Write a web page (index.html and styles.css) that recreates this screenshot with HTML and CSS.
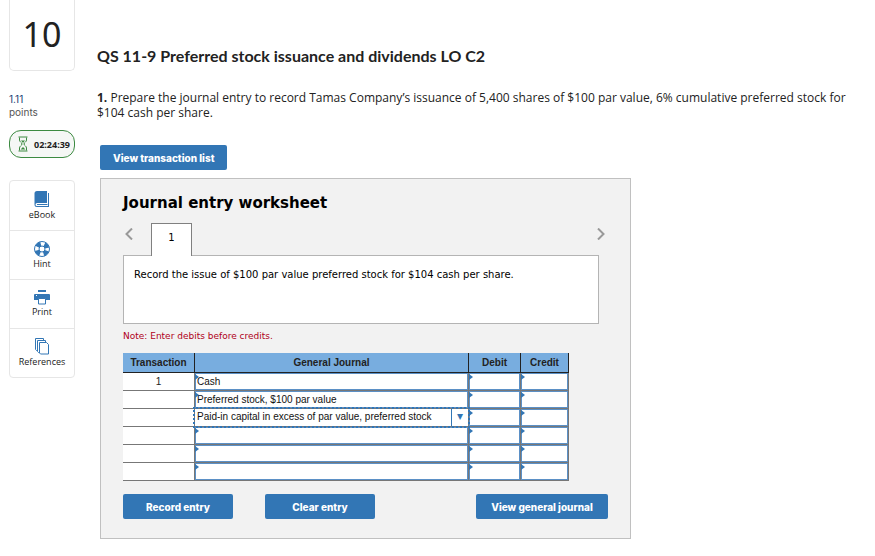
FILE: index.html
```html
<!DOCTYPE html>
<html lang="en">
<head>
    <meta charset="UTF-8">
    <meta name="viewport" content="width=device-width, initial-scale=1.0">
    <title>QS 11-9 Preferred stock issuance and dividends</title>
    <link rel="stylesheet" href="styles.css">
</head>
<body>
    <div class="page">
        <aside class="sidebar">
            <div class="number">10</div>
            <div class="points"><span class="value">1.11</span><br>points</div>
            <div class="timer">
                <svg width="10" height="16" viewBox="0 0 10 16" fill="none" stroke="#3c8a41">
                    <path d="M0.5 1h9M0.5 15h9M1.5 1.500v2.500c0 2 2.500 2.500 2.500 4s-2.500 2-2.500 4v2.500M8.500 1.500v2.500c0 2-2.500 2.500-2.500 4s2.500 2 2.500 4v2.500"/>
                    <path d="M3 4.500h4L5 7zM2.500 13.500L5 11l2.500 2.500z" fill="#3c8a41" stroke="none"/>
                </svg>
                <span>02:24:39</span>
            </div>
            <nav class="tools">
                <a href="#ebook">
                    <svg width="16" height="17" viewBox="0 0 16 17">
                        <path d="M3 0h10v12H3a1.500 1.500 0 0 0 0 3h11V2h1v14H3a2.500 2.500 0 0 1-2.500-2.500v-11A2.500 2.500 0 0 1 3 0z" fill="#3276b5"/>
                        <path d="M3 13.500h10.500" stroke="#3276b5"/>
                    </svg>
                    <span>eBook</span>
                </a>
                <a href="#hint">
                    <svg width="16" height="16" viewBox="0 0 16 16" fill="none" stroke="#3276b5">
                        <circle cx="8" cy="8" r="7.500"/>
                        <circle cx="8" cy="8" r="3"/>
                        <circle cx="8" cy="8" r="5.200" stroke-width="4.600" stroke-dasharray="4.400 3.768" stroke-dashoffset="-1.884"/>
                    </svg>
                    <span>Hint</span>
                </a>
                <a href="#print">
                    <svg width="16" height="15" viewBox="0 0 16 15" fill="#3276b5">
                        <path d="M4 0h8v2H4zM1 4h14a1 1 0 0 1 1 1v5H0V5a1 1 0 0 1 1-1z"/>
                        <path d="M4.500 8.500h7v5.500h-7z" fill="#fff" stroke="#3276b5"/>
                        <path d="M2 5h1v1H2z" fill="#fff"/>
                    </svg>
                    <span>Print</span>
                </a>
                <a href="#references">
                    <svg width="16" height="17" viewBox="0 0 16 17" fill="#fff" stroke="#3276b5">
                        <path d="M1.500 0.500h8v12h-7l-1-1z"/>
                        <path d="M3.500 2.500h8v12h-7l-1-1z"/>
                        <path d="M5.500 4.500h7l2 2v9.500h-8l-1-1z"/>
                    </svg>
                    <span>References</span>
                </a>
            </nav>
        </aside>

        <main class="content">
            <h1>QS 11-9 Preferred stock issuance and dividends LO C2</h1>
            <p class="question"><b>1.</b> Prepare the journal entry to record Tamas Company’s issuance of 5,400 shares of $100 par value, 6% cumulative preferred stock for $104 cash per share.</p>

            <div class="exercise">
                <button class="btn" type="button">View transaction list</button>

                <section class="worksheet">
                    <h2>Journal entry worksheet</h2>
                    <div class="tabs">
                        <button class="arrow" type="button" aria-label="Previous">
                            <svg width="8" height="12" viewBox="0 0 8 12" fill="none" stroke="#999" stroke-width="2"><path d="M7 0.500L1.500 6L7 11.500"/></svg>
                        </button>
                        <button class="tab" type="button">1</button>
                        <button class="arrow next" type="button" aria-label="Next">
                            <svg width="8" height="12" viewBox="0 0 8 12" fill="none" stroke="#999" stroke-width="2"><path d="M1 0.500L6.500 6L1 11.500"/></svg>
                        </button>
                    </div>
                    <div class="description">Record the issue of $100 par value preferred stock for $104 cash per share.</div>
                    <p class="note">Note: Enter debits before credits.</p>

                    <table class="journal">
                        <colgroup>
                            <col class="col-transaction">
                            <col>
                            <col class="col-debit">
                            <col class="col-credit">
                        </colgroup>
                        <thead>
                            <tr><th>Transaction</th><th>General Journal</th><th>Debit</th><th>Credit</th></tr>
                        </thead>
                        <tbody>
                            <tr>
                                <td>1</td>
                                <td class="entry"><input type="text" value="Cash" aria-label="Account 1"></td>
                                <td class="entry"><input type="text" aria-label="Debit 1"></td>
                                <td class="entry"><input type="text" aria-label="Credit 1"></td>
                            </tr>
                            <tr>
                                <td></td>
                                <td class="entry"><input type="text" value="Preferred stock, $100 par value" aria-label="Account 2"></td>
                                <td class="entry"><input type="text" aria-label="Debit 2"></td>
                                <td class="entry"><input type="text" aria-label="Credit 2"></td>
                            </tr>
                            <tr>
                                <td></td>
                                <td class="entry active">
                                    <select aria-label="Account 3">
                                        <option>Paid-in capital in excess of par value, preferred stock</option>
                                        <option>Cash</option>
                                        <option>Preferred stock, $100 par value</option>
                                    </select>
                                </td>
                                <td class="entry"><input type="text" aria-label="Debit 3"></td>
                                <td class="entry"><input type="text" aria-label="Credit 3"></td>
                            </tr>
                            <tr>
                                <td></td>
                                <td class="entry"><input type="text" aria-label="Account 4"></td>
                                <td class="entry"><input type="text" aria-label="Debit 4"></td>
                                <td class="entry"><input type="text" aria-label="Credit 4"></td>
                            </tr>
                            <tr>
                                <td></td>
                                <td class="entry"><input type="text" aria-label="Account 5"></td>
                                <td class="entry"><input type="text" aria-label="Debit 5"></td>
                                <td class="entry"><input type="text" aria-label="Credit 5"></td>
                            </tr>
                            <tr>
                                <td></td>
                                <td class="entry"><input type="text" aria-label="Account 6"></td>
                                <td class="entry"><input type="text" aria-label="Debit 6"></td>
                                <td class="entry"><input type="text" aria-label="Credit 6"></td>
                            </tr>
                        </tbody>
                    </table>

                    <div class="actions">
                        <button class="btn wide" type="button">Record entry</button>
                        <button class="btn wide" type="button">Clear entry</button>
                        <button class="btn last" type="button">View general journal</button>
                    </div>
                </section>
            </div>
        </main>
    </div>
</body>
</html>
```
FILE: styles.css
```css
* {
    box-sizing: border-box;
}
body {
    margin: 0;
    background-color: #fff;
    color: #222;
    font-family: Lato, sans-serif;
}
.page {
    display: flex;
    gap: 22px;
    padding: 0 22px 16px 9px;
}

/* left column */
.sidebar {
    flex: none;
    width: 66px;
}
.number {
    height: 71px;
    border: 1px solid #e6e6e6;
    border-top: none;
    border-radius: 0 0 5px 5px;
    font-family: "Noto Sans", sans-serif;
    font-size: 34px;
    line-height: 68px;
    text-align: center;
}
.points {
    margin-top: 22px;
    font-family: Inter, sans-serif;
    font-size: 10px;
    line-height: 13px;
    color: #555;
}
.value {
    color: #1c3f73;
}
.timer {
    display: flex;
    align-items: center;
    justify-content: space-between;
    height: 28px;
    margin-top: 11px;
    padding: 0 4px 0 8px;
    border: 1px solid #3c8a41;
    border-radius: 12px;
    background-color: #f5f7f5;
    font-family: "Open Sans", sans-serif;
    font-size: 9px;
    font-weight: bold;
}
.tools {
    margin-top: 22px;
    border: 1px solid #e6e6e6;
    border-radius: 4px;
}
.tools a {
    display: flex;
    flex-direction: column;
    align-items: center;
    justify-content: center;
    height: 49px;
    color: #222;
    font-family: "Open Sans", sans-serif;
    font-size: 9px;
    line-height: 13px;
    text-decoration: none;
}
.tools a + a {
    border-top: 1px solid #e6e6e6;
}

/* question */
.content {
    flex: 1;
    min-width: 0;
}
h1 {
    margin: 46px 0 0;
    font-size: 16px;
    line-height: 20px;
}
.question {
    margin: 24px 0 0;
    font-family: "Open Sans", sans-serif;
    font-size: 12px;
    line-height: 15px;
}
.exercise {
    max-width: 534px;
    margin-top: 25px;
    padding-left: 3px;
}
.btn {
    height: 25px;
    padding: 0 13px;
    border: none;
    border-radius: 2px;
    background-color: #3276b5;
    color: #fff;
    font-family: Inter, sans-serif;
    font-size: 10px;
    font-weight: 800;
    cursor: pointer;
}

/* worksheet */
.worksheet {
    margin-top: 8px;
    padding: 14px 22px 19px;
    border: 1px solid #c0c0c0;
    background-color: #f2f2f2;
    color: #000;
    font-family: "DejaVu Sans", sans-serif;
}
h2 {
    margin: 0;
    font-size: 15px;
    line-height: 20px;
}
.tabs {
    display: flex;
    height: 42px;
    padding-top: 10px;
}
.arrow {
    display: flex;
    align-items: center;
    width: 28px;
    height: 22px;
    padding: 0 0 0 2px;
    border: none;
    background: none;
}
.arrow.next {
    width: 13px;
    margin-left: auto;
}
.tab {
    z-index: 1;
    width: 41px;
    height: 33px;
    padding: 0 0 5px;
    border: 1px solid #808080;
    border-bottom: none;
    background-color: #fff;
    color: #000;
    font-family: inherit;
    font-size: 10px;
}
.description {
    min-height: 69px;
    margin-right: 9px;
    padding: 11px 10px;
    border: 1px solid #b4b4b4;
    background-color: #fff;
    font-size: 10px;
    line-height: 15px;
}
.note {
    margin: 5px 0 10px;
    color: #b00020;
    font-size: 9px;
    line-height: 14px;
}
.journal {
    width: 446px;
    max-width: 100%;
    table-layout: fixed;
    border-spacing: 0;
    color: #222;
    font-family: "Liberation Sans", Arial, sans-serif;
    font-size: 10px;
}
.col-transaction {
    width: 72px;
}
.col-debit {
    width: 52px;
}
.col-credit {
    width: 48px;
}
.journal th {
    height: 20px;
    padding: 0;
    border-right: 1px solid #222;
    border-bottom: 1px solid #222;
    background-color: #78addf;
}
.journal td {
    position: relative;
    height: 18px;
    padding: 0;
    border-right: 1px solid #777;
    border-bottom: 1px solid #777;
    background-color: #fff;
    text-align: center;
}
.entry input,
.entry select {
    display: block;
    width: 100%;
    height: 17px;
    padding: 0 1px 1px;
    border: 1px solid #5b90c6;
    border-radius: 0;
    background-color: #fff;
    color: #111;
    font: inherit;
}
.entry::before {
    content: "";
    position: absolute;
    top: 1px;
    left: 0;
    border: 3px solid transparent;
    border-left: 4px solid #3276b5;
    border-right: none;
}
.entry select {
    appearance: none;
    border: none;
    outline: 2px dotted #3276b5;
    padding: 0 2px 2px;
}
.entry.active::before {
    display: none;
}
.entry.active {
    z-index: 1;
}
/* drop-down handle */
.entry.active::after {
    content: "▾";
    position: absolute;
    top: 0;
    right: 0;
    width: 16px;
    height: 17px;
    border-left: 1px solid #3276b5;
    color: #3276b5;
    font-size: 12px;
    line-height: 15px;
    pointer-events: none;
}

.actions {
    display: flex;
    gap: 32px;
    margin-top: 13px;
}
.wide {
    width: 110px;
}
.last {
    width: 132px;
    margin-left: auto;
}
```
